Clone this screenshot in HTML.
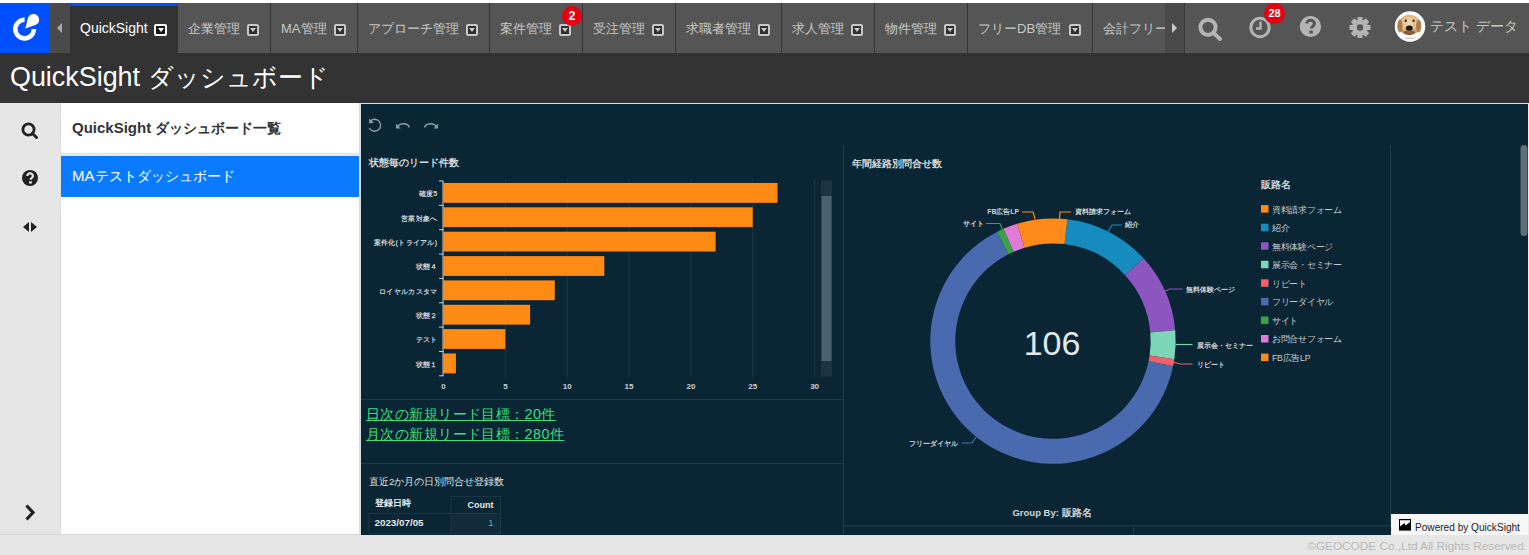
<!DOCTYPE html>
<html><head><meta charset="utf-8">
<style>
*{box-sizing:border-box;margin:0;padding:0}
html,body{width:1529px;height:555px;overflow:hidden;background:#e6e6e6;font-family:"Liberation Sans",sans-serif}
.abs{position:absolute}
#top{position:absolute;left:0;top:0;width:1529px;height:3px;background:#fff}
#nav{position:absolute;left:0;top:3px;width:1529px;height:50px;background:#555}
#logo{position:absolute;left:0;top:0;width:50px;height:50px;background:#0050ff}
#larr{position:absolute;left:50px;top:0;width:20px;height:50px;background:#4a4a4a}
.tab{position:absolute;top:0;height:50px;background:#555;border-left:1px solid #353535;color:#c8c8c8;font-size:13px;line-height:52px;padding-left:10px;white-space:nowrap}
.tab .dd{position:absolute;top:21px;right:11.5px;width:12px;height:12px;border:2px solid #c8c8c8;border-radius:2px;background:#303030}
.tab .dd:after{content:"";position:absolute;left:1px;top:2px;border-left:3px solid transparent;border-right:3px solid transparent;border-top:4.5px solid #c8c8c8}
.tab.act{background:#333;color:#fff;font-size:14px;border-top:3px solid #0050ff;line-height:44px;border-left:none}
.tab.act .dd{top:18px;right:11px;width:13px;background:#151515;border-color:#fff}
.tab.act .dd:after{left:1.5px;border-top-color:#fff}
#rarr{position:absolute;left:1165px;top:0;width:20px;height:50px;background:#4a4a4a;border-right:1px solid #3a3a3a}
.badge{position:absolute;background:#e60012;color:#fff;font-weight:bold;border-radius:50%;text-align:center}
#title{position:absolute;left:0;top:53px;width:1529px;height:50px;background:#333;color:#fff;font-size:26px;line-height:48px;padding-left:10px}
#icol{position:absolute;left:0;top:103px;width:61px;height:432px;background:#e6e6e6}
#side{position:absolute;left:61px;top:103px;width:298px;height:432px;background:#fff}
#dash{position:absolute;left:359px;top:103px;width:1170px;height:432px;background:#0a2634;border-left:2px solid #d9dde0;border-top:1px solid #d9dde0}
#foot{position:absolute;left:0;top:535px;width:1529px;height:20px;background:#e6e6e6;color:#b8b8b8;font-size:11.8px;text-align:right;padding-right:2px;line-height:22px;white-space:nowrap}
</style></head><body>
<div id="top"></div>
<div id="nav">
  <div id="logo"></div>
  <div id="larr"></div>
  <div class="tab act" style="left:70px;width:108px"><span class="tx">QuickSight</span><i class="dd"></i></div>
  <div class="tab" style="left:178px;width:92px;border-left:none"><span class="tx">企業管理</span><i class="dd"></i></div>
  <div class="tab" style="left:270px;width:87px"><span class="tx">MA管理</span><i class="dd"></i></div>
  <div class="tab" style="left:357px;width:132px"><span class="tx">アプローチ管理</span><i class="dd"></i></div>
  <div class="tab" style="left:489px;width:93px"><span class="tx">案件管理</span><i class="dd"></i></div>
  <div class="tab" style="left:582px;width:93px"><span class="tx">受注管理</span><i class="dd"></i></div>
  <div class="tab" style="left:675px;width:106px"><span class="tx">求職者管理</span><i class="dd"></i></div>
  <div class="tab" style="left:781px;width:93px"><span class="tx">求人管理</span><i class="dd"></i></div>
  <div class="tab" style="left:874px;width:93px"><span class="tx">物件管理</span><i class="dd"></i></div>
  <div class="tab" style="left:967px;width:125px"><span class="tx">フリーDB管理</span><i class="dd"></i></div>
  <div class="tab" style="left:1092px;width:73px;overflow:hidden"><span class="tx">会計フリー</span></div>
  <div id="rarr"></div>
  <svg id="logosvg" class="abs" style="left:0;top:0" width="50" height="50" viewBox="0 0 50 50">
    <path d="M24.6 16.8 A9.3 9.3 0 1 0 33.9 26.1" fill="none" stroke="#fff" stroke-width="4.6"/>
    <path d="M25.3 25.5 L27.87 15.22 A5.7 5.7 0 1 1 35.3 21.98 Z" fill="#fff"/>
  </svg>
  <svg class="abs" style="left:54px;top:18px" width="12" height="14" viewBox="0 0 12 14"><path d="M8 2 L3 7 L8 12 Z" fill="#aaa"/></svg>
  <svg class="abs" style="left:1168px;top:18px" width="12" height="14" viewBox="0 0 12 14"><path d="M4 2 L9 7 L4 12 Z" fill="#c8c8c8"/></svg>
  <svg class="abs" style="left:1196px;top:9.5px" width="30" height="30" viewBox="0 0 30 30"><circle cx="12" cy="14.3" r="7.6" fill="none" stroke="#b4b4b4" stroke-width="4"/><path d="M17.5 20 L24 26" stroke="#b4b4b4" stroke-width="4" stroke-linecap="round"/></svg>
  <svg class="abs" style="left:1246px;top:9.5px" width="30" height="30" viewBox="0 0 30 30"><circle cx="14" cy="14.5" r="9.2" fill="none" stroke="#b4b4b4" stroke-width="3"/><path d="M14.5 8.5 V15.5 H10" fill="none" stroke="#b4b4b4" stroke-width="2.4"/></svg>
  <div class="badge" style="left:1264px;top:0px;width:21px;height:21px;font-size:11px;line-height:21px">28</div>
  <div class="badge" style="left:562px;top:3px;width:20px;height:20px;font-size:12px;line-height:20px">2</div>
  <svg class="abs" style="left:1296px;top:9px" width="30" height="30" viewBox="0 0 30 30"><circle cx="14.5" cy="14.5" r="10.6" fill="#b4b4b4"/><path d="M10.8 11.6 C10.8 7.2 18.4 7.2 18.4 11.6 C18.4 14.2 15.4 14.2 15.4 16.6" fill="none" stroke="#555" stroke-width="3"/><rect x="13.4" y="18.6" width="3.4" height="3" fill="#555"/></svg>
  <svg class="abs" style="left:1345px;top:9px" width="30" height="30" viewBox="0 0 30 30"><g fill="#b4b4b4" transform="translate(15 15.5)"><circle r="7.8"/>
    <rect x="-2.6" y="-10.6" width="5.2" height="5" rx="1"/><rect x="-2.6" y="-10.6" width="5.2" height="5" rx="1" transform="rotate(45)"/><rect x="-2.6" y="-10.6" width="5.2" height="5" rx="1" transform="rotate(90)"/><rect x="-2.6" y="-10.6" width="5.2" height="5" rx="1" transform="rotate(135)"/><rect x="-2.6" y="-10.6" width="5.2" height="5" rx="1" transform="rotate(180)"/><rect x="-2.6" y="-10.6" width="5.2" height="5" rx="1" transform="rotate(225)"/><rect x="-2.6" y="-10.6" width="5.2" height="5" rx="1" transform="rotate(270)"/><rect x="-2.6" y="-10.6" width="5.2" height="5" rx="1" transform="rotate(315)"/></g><circle cx="15" cy="15.5" r="3.2" fill="#555"/></svg>
  <svg class="abs" style="left:1394px;top:7.5px" width="32" height="32" viewBox="0 0 32 32">
    <defs><radialGradient id="dg" cx="50%" cy="40%" r="60%"><stop offset="0" stop-color="#f0dcb8"/><stop offset="0.55" stop-color="#e2bd8a"/><stop offset="1" stop-color="#b9864f"/></radialGradient></defs>
    <circle cx="16" cy="15.5" r="15.2" fill="#fff"/>
    <ellipse cx="15.3" cy="14" rx="10.8" ry="10.2" fill="url(#dg)"/>
    <ellipse cx="5.8" cy="15" rx="2.6" ry="6.5" fill="#a8733f" opacity="0.85"/><ellipse cx="24.8" cy="15" rx="2.6" ry="6.5" fill="#a8733f" opacity="0.85"/>
    <ellipse cx="15.3" cy="21.5" rx="5.5" ry="2.6" fill="#6b4526" opacity="0.7"/>
    <ellipse cx="15.3" cy="17" rx="3.4" ry="2.6" fill="#1e1410"/>
    <circle cx="11.8" cy="9.8" r="1.2" fill="#4a2a12"/><circle cx="19.5" cy="9.8" r="1.2" fill="#4a2a12"/>
    <rect x="11" y="26.5" width="9" height="1.6" fill="#aaa" opacity="0.6"/>
  </svg>
  <div class="abs" style="left:1430px;top:-2px;height:50px;line-height:50px;font-size:14px;color:#c8c8c8;white-space:nowrap">テスト データ</div>
</div>
<div id="title"><span style="font-size:26.9px">QuickSight </span><span style="font-size:25px">ダッシュボード</span></div>
<div id="icol">
  <svg class="abs" style="left:20px;top:18px" width="20" height="20" viewBox="0 0 20 20"><circle cx="8.5" cy="8.5" r="5.6" fill="none" stroke="#222" stroke-width="2.8"/><path d="M12.5 12.5 L16.5 16.5" stroke="#222" stroke-width="3" stroke-linecap="round"/></svg>
  <svg class="abs" style="left:20px;top:65px" width="20" height="20" viewBox="0 0 20 20"><circle cx="10" cy="10" r="8" fill="#222"/><path d="M7.3 8 C7.3 4.6 12.9 4.6 12.9 8 C12.9 10 10.6 10 10.6 11.8" fill="none" stroke="#e6e6e6" stroke-width="2.2"/><rect x="9.2" y="13.2" width="2.6" height="2.4" fill="#e6e6e6"/></svg>
  <svg class="abs" style="left:20px;top:114px" width="20" height="20" viewBox="0 0 20 20"><path d="M9 5 L3 10 L9 15 Z M11 5 L17 10 L11 15 Z" fill="#222"/></svg>
  <svg class="abs" style="left:20px;top:400px" width="20" height="20" viewBox="0 0 20 20"><path d="M6.5 2.5 L13 9.5 L6.5 16.5" fill="none" stroke="#222" stroke-width="3.2"/></svg>
</div>
<div id="side">
  <div class="abs" style="left:0;top:0;width:298px;height:53px;border-bottom:3px solid #e8e8e8"></div>
  <div class="abs" style="left:11px;top:15.5px;font-size:15px;font-weight:bold;color:#333;white-space:nowrap">QuickSight <span style="font-size:14px">ダッシュボード一覧</span></div>
  <div class="abs" style="left:0;top:53px;width:298px;height:41px;background:#0a7bff"></div>
  <div class="abs" style="left:11px;top:64px;font-size:15px;color:#fff;white-space:nowrap">MA<span style="font-size:14px">テストダッシュボード</span></div>
</div>
<div id="dash"></div>
<svg id="charts" class="abs" style="left:0;top:0" width="1529" height="555" viewBox="0 0 1529 555">
<style>
.ax{font-size:8px;fill:#c8d0d6;font-weight:bold}
.yl{letter-spacing:0.3px;font-size:7.2px;fill:#c8d0d6;font-weight:bold}
.lg{letter-spacing:-0.3px;font-size:8.8px;fill:#c3cbd1}
.lgt{font-size:10px;fill:#d0d6da;font-weight:bold}
.dl{font-size:6.8px;fill:#d0d6da;font-weight:bold}
.ttl{font-size:9.6px;fill:#d2d9dd;font-weight:bold}
.gb{font-size:9.5px;fill:#d0d6da;font-weight:bold}
.th{font-size:9px;fill:#e6eaed;font-weight:bold}
</style>
<!-- panel lines -->
<line x1="843.5" y1="145" x2="843.5" y2="535" stroke="#21394a" stroke-width="1"/>
<line x1="1390.5" y1="145" x2="1390.5" y2="526" stroke="#21394a" stroke-width="1"/>
<line x1="361" y1="399.5" x2="843" y2="399.5" stroke="#21394a" stroke-width="1.2"/>
<line x1="361" y1="463.5" x2="843" y2="463.5" stroke="#21394a" stroke-width="1.2"/>
<line x1="843" y1="525.8" x2="1391" y2="525.8" stroke="#21394a" stroke-width="1.2"/>
<line x1="1133.5" y1="526" x2="1133.5" y2="535" stroke="#21394a" stroke-width="1"/>
<!-- toolbar -->
<g fill="none" stroke="#8c9ca6" stroke-width="1.4">
<path d="M370.3 121 A6 6 0 1 1 369.3 128"/>
<path d="M397.5 127.5 A6.3 5.3 0 0 1 409.5 127.5"/>
<path d="M424.5 127.5 A6.3 5.3 0 0 1 436.5 127.5"/>
</g>
<g fill="#8c9ca6">
<path d="M369 118.5 L369.3 123.5 L374 122.8 Z"/>
<path d="M396 123.5 L396 128.5 L400.5 128.5 Z"/>
<path d="M438 123.5 L438 128.5 L433.5 128.5 Z"/>
</g>
<!-- titles -->
<text x="369" y="166" class="ttl">状態毎のリード件数</text>
<text x="851.5" y="167" class="ttl">年間経路別問合せ数</text>
<text x="369" y="484.5" class="ttl" style="font-weight:normal;fill:#dde3e6">直近2か月の日別問合せ登録数</text>
<text x="443.5" y="388.5" text-anchor="middle" class="ax">0</text>
<line x1="505.4" y1="179" x2="505.4" y2="377" stroke="#1f3747" stroke-width="1"/>
<text x="505.4" y="388.5" text-anchor="middle" class="ax">5</text>
<line x1="567.2" y1="179" x2="567.2" y2="377" stroke="#1f3747" stroke-width="1"/>
<text x="567.2" y="388.5" text-anchor="middle" class="ax">10</text>
<line x1="629.0" y1="179" x2="629.0" y2="377" stroke="#1f3747" stroke-width="1"/>
<text x="629.0" y="388.5" text-anchor="middle" class="ax">15</text>
<line x1="690.9" y1="179" x2="690.9" y2="377" stroke="#1f3747" stroke-width="1"/>
<text x="690.9" y="388.5" text-anchor="middle" class="ax">20</text>
<line x1="752.8" y1="179" x2="752.8" y2="377" stroke="#1f3747" stroke-width="1"/>
<text x="752.8" y="388.5" text-anchor="middle" class="ax">25</text>
<line x1="814.6" y1="179" x2="814.6" y2="377" stroke="#1f3747" stroke-width="1"/>
<text x="814.6" y="388.5" text-anchor="middle" class="ax">30</text>
<rect x="443.5" y="183.0" width="334.0" height="19.8" fill="#ff8a14"/>
<text x="437.5" y="196.3" text-anchor="end" class="yl">確度5</text>
<rect x="443.5" y="207.3" width="309.2" height="19.8" fill="#ff8a14"/>
<text x="437.5" y="220.7" text-anchor="end" class="yl">営業対象へ</text>
<rect x="443.5" y="231.7" width="272.1" height="19.8" fill="#ff8a14"/>
<text x="437.5" y="245.0" text-anchor="end" class="yl">案件化(トライアル)</text>
<rect x="443.5" y="256.1" width="160.8" height="19.8" fill="#ff8a14"/>
<text x="437.5" y="269.4" text-anchor="end" class="yl">状態４</text>
<rect x="443.5" y="280.4" width="111.3" height="19.8" fill="#ff8a14"/>
<text x="437.5" y="293.7" text-anchor="end" class="yl">ロイヤルカスタマ</text>
<rect x="443.5" y="304.8" width="86.6" height="19.8" fill="#ff8a14"/>
<text x="437.5" y="318.1" text-anchor="end" class="yl">状態２</text>
<rect x="443.5" y="329.1" width="61.8" height="19.8" fill="#ff8a14"/>
<text x="437.5" y="342.4" text-anchor="end" class="yl">テスト</text>
<rect x="443.5" y="353.5" width="12.4" height="19.8" fill="#ff8a14"/>
<text x="437.5" y="366.8" text-anchor="end" class="yl">状態１</text>
<line x1="439" y1="181.0" x2="443.5" y2="181.0" stroke="#c8d0d6" stroke-width="1"/>
<line x1="439" y1="205.3" x2="443.5" y2="205.3" stroke="#c8d0d6" stroke-width="1"/>
<line x1="439" y1="229.7" x2="443.5" y2="229.7" stroke="#c8d0d6" stroke-width="1"/>
<line x1="439" y1="254.1" x2="443.5" y2="254.1" stroke="#c8d0d6" stroke-width="1"/>
<line x1="439" y1="278.4" x2="443.5" y2="278.4" stroke="#c8d0d6" stroke-width="1"/>
<line x1="439" y1="302.8" x2="443.5" y2="302.8" stroke="#c8d0d6" stroke-width="1"/>
<line x1="439" y1="327.1" x2="443.5" y2="327.1" stroke="#c8d0d6" stroke-width="1"/>
<line x1="439" y1="351.5" x2="443.5" y2="351.5" stroke="#c8d0d6" stroke-width="1"/>
<line x1="439" y1="375.8" x2="443.5" y2="375.8" stroke="#c8d0d6" stroke-width="1"/>
<line x1="443" y1="181" x2="443" y2="376" stroke="#c8d0d6" stroke-width="1"/>
<!-- table -->
<rect x="451" y="496.5" width="49.5" height="17" fill="none" stroke="#1d3544" stroke-width="1"/>
<rect x="369" y="513.5" width="131.5" height="20" fill="none" stroke="#1d3544" stroke-width="1"/>
<rect x="451" y="514" width="49" height="19" fill="#112b3a"/>
<line x1="451" y1="513.5" x2="451" y2="533.5" stroke="#1d3544" stroke-width="1"/>
<text x="374.5" y="505.5" class="th">登録日時</text>
<text x="493.5" y="507.5" text-anchor="end" class="th">Count</text>
<text x="374.5" y="526" class="th" style="font-size:9.8px">2023/07/05</text>
<text x="493.5" y="526" text-anchor="end" style="font-size:9.5px;fill:#4fb3c8">1</text>
<!-- scrollbar -->
<rect x="821" y="180.5" width="11" height="196" fill="#1c3342"/>
<rect x="821.5" y="196" width="10" height="165" fill="#4a6170"/>
<!-- donut -->
<path d="M1053.00 218.40 A122.7 122.7 0 0 1 1067.51 219.26 L1064.56 244.09 A97.7 97.7 0 0 0 1053.00 243.40 Z" fill="#ff8a1a"/>
<path d="M1067.51 219.26 A122.7 122.7 0 0 1 1143.53 258.28 L1125.09 275.15 A97.7 97.7 0 0 0 1064.56 244.09 Z" fill="#168bbd"/>
<path d="M1143.53 258.28 A122.7 122.7 0 0 1 1175.22 330.20 L1150.31 332.42 A97.7 97.7 0 0 0 1125.09 275.15 Z" fill="#8d55c0"/>
<path d="M1175.22 330.20 A122.7 122.7 0 0 1 1174.36 359.22 L1149.63 355.53 A97.7 97.7 0 0 0 1150.31 332.42 Z" fill="#7ed6b8"/>
<path d="M1174.36 359.22 A122.7 122.7 0 0 1 1173.07 366.37 L1148.60 361.22 A97.7 97.7 0 0 0 1149.63 355.53 Z" fill="#f0606a"/>
<path d="M1173.07 366.37 A122.7 122.7 0 1 1 996.97 231.94 L1008.39 254.18 A97.7 97.7 0 1 0 1148.60 361.22 Z" fill="#4a6ab0"/>
<path d="M996.97 231.94 A122.7 122.7 0 0 1 1003.54 228.81 L1013.61 251.69 A97.7 97.7 0 0 0 1008.39 254.18 Z" fill="#3aa34a"/>
<path d="M1003.54 228.81 A122.7 122.7 0 0 1 1017.16 223.75 L1024.47 247.66 A97.7 97.7 0 0 0 1013.61 251.69 Z" fill="#e07ad6"/>
<path d="M1017.16 223.75 A122.7 122.7 0 0 1 1053.00 218.40 L1053.00 243.40 A97.7 97.7 0 0 0 1024.47 247.66 Z" fill="#ff8a1a"/>
<text x="1052" y="355" text-anchor="middle" style="font-size:34px;fill:#e3e8eb">106</text>
<text x="1261" y="187.5" class="lgt">販路名</text>
<rect x="1261" y="205.1" width="7.5" height="7.5" fill="#ff8a1a"/>
<text x="1272" y="212.5" class="lg">資料請求フォーム</text>
<rect x="1261" y="223.7" width="7.5" height="7.5" fill="#168bbd"/>
<text x="1272" y="231.1" class="lg">紹介</text>
<rect x="1261" y="242.2" width="7.5" height="7.5" fill="#8d55c0"/>
<text x="1272" y="249.6" class="lg">無料体験ページ</text>
<rect x="1261" y="260.8" width="7.5" height="7.5" fill="#7ed6b8"/>
<text x="1272" y="268.2" class="lg">展示会・セミナー</text>
<rect x="1261" y="279.3" width="7.5" height="7.5" fill="#f0606a"/>
<text x="1272" y="286.7" class="lg">リピート</text>
<rect x="1261" y="297.9" width="7.5" height="7.5" fill="#4a6ab0"/>
<text x="1272" y="305.3" class="lg">フリーダイヤル</text>
<rect x="1261" y="316.5" width="7.5" height="7.5" fill="#3aa34a"/>
<text x="1272" y="323.9" class="lg">サイト</text>
<rect x="1261" y="335.0" width="7.5" height="7.5" fill="#e07ad6"/>
<text x="1272" y="342.4" class="lg">お問合せフォーム</text>
<rect x="1261" y="353.6" width="7.5" height="7.5" fill="#ff8a1a"/>
<text x="1272" y="361.0" class="lg">FB広告LP</text>
<!-- donut labels -->
<g fill="none" stroke-width="1.2">
<path d="M986 187.5 L1000 187.5 L1004 197" stroke="#3aa34a" transform="translate(0 36)"/>
<path d="M1022 212 L1033 212 L1035 219" stroke="#ff8a1a"/>
<path d="M1059.5 219 L1060 212 L1071 212" stroke="#ff8a1a"/>
<path d="M1108 232 L1112 225 L1122 225" stroke="#168bbd"/>
<path d="M1165 291 L1170 289 L1182.5 289" stroke="#8d55c0"/>
<path d="M1176 344.5 L1192.5 344.5" stroke="#7ed6b8"/>
<path d="M1173 362 L1180 364 L1192.5 364" stroke="#f0606a"/>
<path d="M962 443 L972 443 L976 437" stroke="#4a6ab0"/>
</g>
<text x="984" y="225.5" text-anchor="end" class="dl">サイト</text>
<text x="1019" y="214" text-anchor="end" class="dl">FB広告LP</text>
<text x="1074.5" y="214" class="dl">資料請求フォーム</text>
<text x="1125" y="226.5" class="dl">紹介</text>
<text x="1185.5" y="291.5" class="dl">無料体験ページ</text>
<text x="1196.5" y="347.5" class="dl">展示会・セミナー</text>
<text x="1196.5" y="366.5" class="dl">リピート</text>
<text x="958" y="446" text-anchor="end" class="dl">フリーダイヤル</text>
<text x="1052" y="515.5" text-anchor="middle" class="gb">Group By: 販路名</text>
<!-- right scrollbar -->
<rect x="1520.5" y="145" width="7" height="91" rx="3.5" fill="#5f6f7a"/>
</svg>
<div class="abs" style="left:366px;top:404px;color:#40de7c;font-size:14.4px;letter-spacing:0.42px;line-height:20px;text-decoration:underline;white-space:nowrap">日次の新規リード目標：20件<br>月次の新規リード目標：280件</div>
<div class="abs" style="left:1391px;top:514px;width:137px;height:21px;background:#f7f7f7;font-size:10.1px;color:#222;line-height:27px;padding-left:24px;white-space:nowrap">Powered by QuickSight</div>
<svg class="abs" style="left:1399px;top:519px" width="12" height="12" viewBox="0 0 12 12"><rect width="12" height="11.6" fill="#000"/><path d="M1 1.2 L11 1.2 L11 2.9 L6.5 6.6 L5.4 4 L1.1 7.4 Z" fill="#fff"/></svg>
<div class="abs" style="left:1528px;top:103px;width:1px;height:432px;background:#e8eaec"></div>
<div class="abs" style="left:0;top:534px;width:359px;height:1px;background:#d6d6d6"></div>
<div class="abs" style="left:60px;top:103px;width:1px;height:431px;background:#dedede"></div>
<div id="foot">©GEOCODE Co.,Ltd All Rights Reserved.</div>
</body></html>
